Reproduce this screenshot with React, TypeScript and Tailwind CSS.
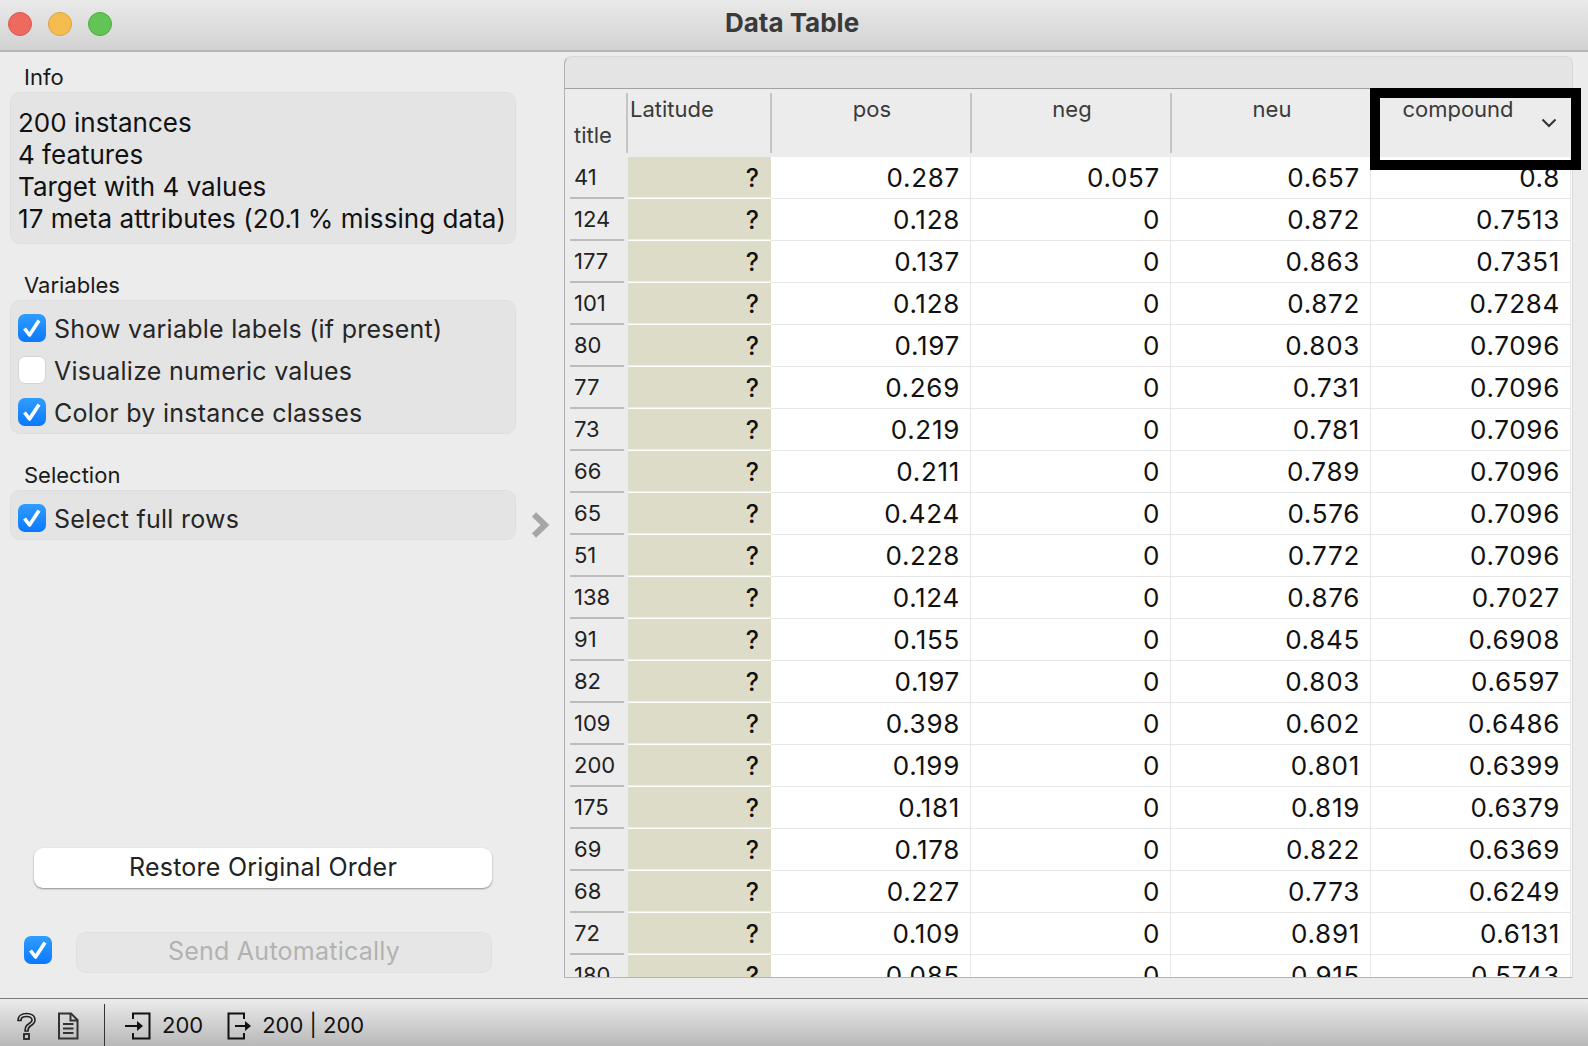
import React from 'react';

const FONT = '"Inter", "Noto Sans", sans-serif';

const rows: [string, string, string, string, string][] = [
  ['41', '0.287', '0.057', '0.657', '0.8'],
  ['124', '0.128', '0', '0.872', '0.7513'],
  ['177', '0.137', '0', '0.863', '0.7351'],
  ['101', '0.128', '0', '0.872', '0.7284'],
  ['80', '0.197', '0', '0.803', '0.7096'],
  ['77', '0.269', '0', '0.731', '0.7096'],
  ['73', '0.219', '0', '0.781', '0.7096'],
  ['66', '0.211', '0', '0.789', '0.7096'],
  ['65', '0.424', '0', '0.576', '0.7096'],
  ['51', '0.228', '0', '0.772', '0.7096'],
  ['138', '0.124', '0', '0.876', '0.7027'],
  ['91', '0.155', '0', '0.845', '0.6908'],
  ['82', '0.197', '0', '0.803', '0.6597'],
  ['109', '0.398', '0', '0.602', '0.6486'],
  ['200', '0.199', '0', '0.801', '0.6399'],
  ['175', '0.181', '0', '0.819', '0.6379'],
  ['69', '0.178', '0', '0.822', '0.6369'],
  ['68', '0.227', '0', '0.773', '0.6249'],
  ['72', '0.109', '0', '0.891', '0.6131'],
  ['180', '0.085', '0', '0.915', '0.5743'],
];

function CheckBox({ checked = true }: { checked?: boolean }) {
  if (!checked) {
    return <div className="w-[28px] h-[28px] shrink-0 rounded-[7px] bg-white border border-[#d4d4d4]" />;
  }
  return (
    <div className="w-[28px] h-[28px] shrink-0 rounded-[7px] bg-gradient-to-b from-[#2f9dff] to-[#0a78ff] flex items-center justify-center">
      <svg width="22" height="22" viewBox="0 0 22 22" fill="none">
        <path d="M3.5 11.5L8.5 18L18 3.5" stroke="white" strokeWidth="3.6" strokeLinejoin="round" />
      </svg>
    </div>
  );
}

function CheckRow({ label, checked }: { label: string; checked?: boolean }) {
  return (
    <div className="h-[42px] flex items-center gap-[8px] text-[25px] tracking-[0.25px] text-[#262626]">
      <CheckBox checked={checked} />
      <span className="pt-[4px]">{label}</span>
    </div>
  );
}

function Sidebar() {
  return (
    <div className="w-[564px] shrink-0 flex">
      <div className="w-[506px] ml-[10px] shrink-0 flex flex-col pt-[13px] pb-[25px]">
        <div className="h-[24px] leading-[24px] pl-[14px] text-[22px] text-[#1a1a1a]">Info</div>
        <div className="mt-[3px] h-[152px] rounded-[10px] border border-[#dedede] bg-[#e4e4e4] pl-[7px] pt-[14px] text-[26px] leading-[32px] text-[#111]">
          <div>200 instances</div>
          <div>4 features</div>
          <div>Target with 4 values</div>
          <div className="whitespace-nowrap tracking-[0.05px]">17 meta attributes (20.1 % missing data)</div>
        </div>
        <div className="mt-[29px] h-[24px] leading-[24px] pl-[14px] text-[22px] text-[#1a1a1a]">Variables</div>
        <div className="mt-[3px] h-[134px] rounded-[10px] border border-[#dedede] bg-[#e4e4e4] pl-[7px] pt-[6px]">
          <CheckRow label="Show variable labels (if present)" />
          <CheckRow label="Visualize numeric values" checked={false} />
          <CheckRow label="Color by instance classes" />
        </div>
        <div className="mt-[29px] h-[24px] leading-[24px] pl-[14px] text-[22px] text-[#1a1a1a]">Selection</div>
        <div className="mt-[3px] h-[50px] rounded-[10px] border border-[#dedede] bg-[#e4e4e4] pl-[7px] pt-[6px]">
          <CheckRow label="Select full rows" />
        </div>
        <div className="flex-1" />
        <button className="ml-[24px] w-[458px] h-[40px] rounded-[9px] bg-white text-[25px] tracking-[0.25px] text-[#222] shadow-[0_1px_2px_rgba(0,0,0,0.4)]">
          Restore Original Order
        </button>
        <div className="mt-[44px] flex items-start pl-[14px] h-[41px]">
          <div className="mt-[4px]">
            <CheckBox />
          </div>
          <button className="ml-[24px] w-[416px] h-[41px] pb-[2px] rounded-[10px] border border-[#e0e0e0] bg-[#e6e6e6] text-[25px] tracking-[0.25px] text-[#b2b2b2]">
            Send Automatically
          </button>
        </div>
      </div>
      <div className="flex-1 flex items-center justify-end pr-[14px]">
        <svg width="20" height="26" viewBox="0 0 20 26" fill="none">
          <path d="M4 2.5L15 13L4 23.5" stroke="#a6a6a6" strokeWidth="6" />
        </svg>
      </div>
    </div>
  );
}

function HeaderCell({ label }: { label: string }) {
  return (
    <div className="h-[68px] relative pl-[2px] pt-[8px] text-center text-[22px] leading-[24px] text-[#3a3a3a]">
      {label}
      <div className="absolute right-[-1px] top-[4px] w-[2px] h-[60px] bg-[#c4c4c4]" />
    </div>
  );
}

function DataTable() {
  return (
    <div className="flex-1 mt-[4px] mb-[20px] mr-[15px] rounded-t-[8px] border border-[#d8d8d8] border-b-[#b4b4b4] border-l-[#b0b0b0] bg-[#e4e4e4] flex flex-col relative">
      <div className="h-[32px] shrink-0 border-b border-[#a0a0a0]" />
      <div className="flex-1 overflow-hidden bg-white">
        <div className="grid grid-cols-[63px_143px_200px_200px_200px_200px] bg-[#ececec]">
          <div className="h-[68px] relative pl-[9px] pt-[34px] text-[22px] leading-[24px] text-[#3a3a3a]">
            title
            <div className="absolute right-0 top-[4px] w-[2px] h-[60px] bg-[#c4c4c4]" />
          </div>
          <div className="h-[68px] relative pl-[2px] pt-[8px] text-[22px] leading-[24px] text-[#3a3a3a]">
            Latitude
            <div className="absolute right-[-1px] top-[4px] w-[2px] h-[60px] bg-[#c4c4c4]" />
          </div>
          <HeaderCell label="pos" />
          <HeaderCell label="neg" />
          <HeaderCell label="neu" />
          <div className="h-[68px] relative pt-[8px] pr-[26px] text-center text-[22px] leading-[24px] text-[#3a3a3a]">
            compound
            <svg className="absolute right-[14px] top-[29px]" width="16" height="10" viewBox="0 0 16 10" fill="none">
              <path d="M1.5 1.5L8 8L14.5 1.5" stroke="#333" strokeWidth="2" />
            </svg>
          </div>
        </div>
        <div className="grid grid-cols-[63px_143px_200px_200px_200px_200px] text-[26px] tracking-[0.7px] text-[#111]">
          {rows.map((r) => (
            <React.Fragment key={r[0]}>
              <div className="h-[42px] bg-[#ececec] pl-[5px] pr-[4px]">
                <div className="h-[42px] border-b-2 border-[#bcbcbc] pl-[4px] flex items-center text-[22px] tracking-normal text-[#222]">{r[0]}</div>
              </div>
              <div className="h-[42px] bg-[#ececec] pb-[1px] border-b border-white">
                <div className="h-full bg-[#dcdcc8] pr-[12px] pt-[3px] flex items-center justify-end text-[25px] font-medium tracking-normal">?</div>
              </div>
              {r.slice(1).map((v, i) => (
                <div key={i} className="h-[42px] border-b border-r border-[#e6e6e6] pr-[10px] flex items-center justify-end">{v}</div>
              ))}
            </React.Fragment>
          ))}
        </div>
      </div>
      {/* marker drawn over the sorted column */}
      <div className="absolute left-[805px] top-[31px] w-[211px] h-[82px] border-[10px] border-black pointer-events-none" />
    </div>
  );
}

function StatusBar() {
  return (
    <div className="h-[48px] shrink-0 border-t border-[#7d7d7d] bg-gradient-to-b from-[#ececec] to-[#b8b8b8] flex items-center pt-[6px] text-[22px] text-[#111]">
      <svg className="ml-[16px]" width="21" height="28" viewBox="0 0 21 28" fill="none">
        <path d="M2 8.5C2 4 5.5 1.5 10.5 1.5C15.5 1.5 19 4 19 8C19 11 17 12.5 14.5 14C12.5 15.2 12 16 12 19H9C9 15 10 13.5 12.5 12C14.8 10.6 16 9.8 16 8C16 5.8 13.8 4.5 10.5 4.5C7 4.5 5 6 5 8.5Z" stroke="#222" strokeWidth="1.6" />
        <rect x="8" y="22" width="5" height="5" stroke="#222" strokeWidth="1.8" />
      </svg>
      <svg className="ml-[20px]" width="22" height="28" viewBox="0 0 22 28" fill="none">
        <path d="M2 1.5H14L20.5 8V26.5H2Z" stroke="#333" strokeWidth="2" />
        <path d="M13.5 2V8.5H20M6 12H16.5M6 16.5H16.5M6 21H16.5" stroke="#333" strokeWidth="2" />
      </svg>
      <div className="ml-[25px] w-px h-[42px] self-end bg-[#333]" />
      <svg className="ml-[20px]" width="26" height="28" viewBox="0 0 26 28" fill="none">
        <path d="M8 7V1.5H24.5V26.5H8V21" stroke="#111" strokeWidth="2" />
        <path d="M0 14H14" stroke="#111" strokeWidth="2" />
        <path d="M12 9L18 14L12 19Z" fill="#111" />
      </svg>
      <span className="ml-[11px]">200</span>
      <svg className="ml-[24px]" width="26" height="28" viewBox="0 0 26 28" fill="none">
        <path d="M17 7V1.5H1.5V26.5H17V21" stroke="#111" strokeWidth="2" />
        <path d="M8 14H20" stroke="#111" strokeWidth="2" />
        <path d="M18 9L24 14L18 19Z" fill="#111" />
      </svg>
      <span className="ml-[9px]">200 | 200</span>
    </div>
  );
}

export default function App() {
  return (
    <div className="w-[1588px] h-[1046px] overflow-hidden bg-[#ececec] flex flex-col" style={{ fontFamily: FONT }}>
      <div className="h-[52px] shrink-0 relative border-b-2 border-[#b4b4b4] bg-gradient-to-b from-[#eaeaea] to-[#d2d2d2] flex items-center justify-center pr-[4px] pb-[5px]">
        <div className="absolute left-[8px] top-[12px] flex gap-[16px]">
          <div className="w-[24px] h-[24px] rounded-full bg-[#ee6a5f] border border-[#d9574d]" />
          <div className="w-[24px] h-[24px] rounded-full bg-[#f5bd4f] border border-[#dca03a]" />
          <div className="w-[24px] h-[24px] rounded-full bg-[#61c454] border border-[#50a840]" />
        </div>
        <span className="text-[26px] font-bold text-[#3a3a3a]">Data Table</span>
      </div>
      <div className="flex-1 flex min-h-0">
        <Sidebar />
        <DataTable />
      </div>
      <StatusBar />
    </div>
  );
}
